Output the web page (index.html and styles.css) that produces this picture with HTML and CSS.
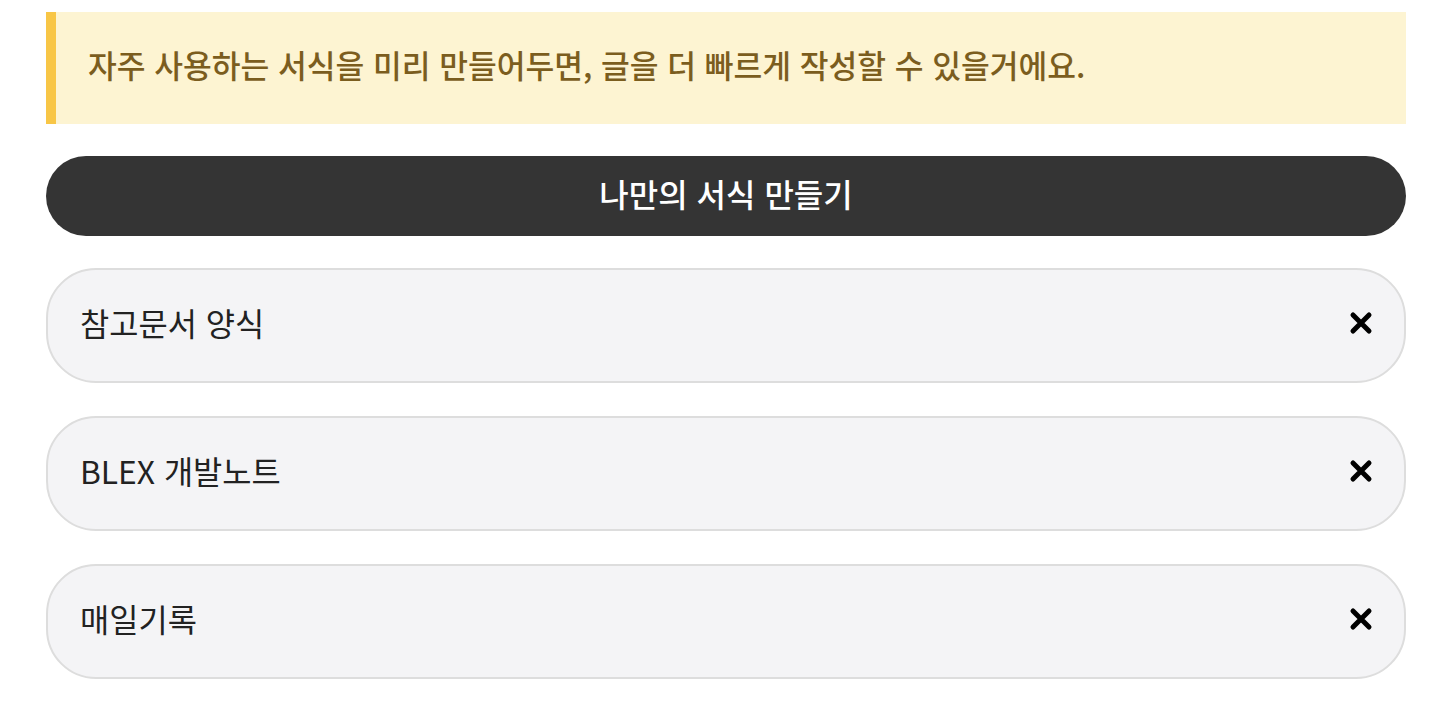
FILE: index.html
```html
<!DOCTYPE html>
<html lang="ko">
<head>
<meta charset="utf-8">
<link rel="stylesheet" href="styles.css">
</head>
<body>
<div class="page">
  <div class="alert">자주 사용하는 서식을 미리 만들어두면, 글을 더 빠르게 작성할 수 있을거에요.</div>
  <button class="create">나만의 서식 만들기</button>
  <ul class="list">
    <li class="item"><span class="name">참고문서 양식</span><svg class="close" viewBox="0 0 24 24" width="24" height="24"><path d="M4 4L20 20M20 4L4 20" stroke="#000" stroke-width="5" stroke-linecap="round"/></svg></li>
    <li class="item"><span class="name">BLEX 개발노트</span><svg class="close" viewBox="0 0 24 24" width="24" height="24"><path d="M4 4L20 20M20 4L4 20" stroke="#000" stroke-width="5" stroke-linecap="round"/></svg></li>
    <li class="item"><span class="name">매일기록</span><svg class="close" viewBox="0 0 24 24" width="24" height="24"><path d="M4 4L20 20M20 4L4 20" stroke="#000" stroke-width="5" stroke-linecap="round"/></svg></li>
  </ul>
</div>
</body>
</html>
```

FILE: styles.css
```css
html, body {
  margin: 0;
  padding: 0;
  background: #fff;
}
body {
  font-family: "Noto Sans CJK KR", "Noto Sans", sans-serif;
}
.page {
  padding: 12px 42px 0 46px;
  display: flex;
  flex-direction: column;
}
.alert {
  height: 112px;
  box-sizing: border-box;
  background: #fdf4d2;
  border-left: 10px solid #f8c646;
  color: #7b5d1e;
  font-size: 31.25px;
  font-weight: 500;
  display: flex;
  align-items: center;
  padding-left: 32px;
  padding-bottom: 8px;
}
.create {
  margin-top: 32px;
  height: 80px;
  border: none;
  border-radius: 40px;
  background: #343434;
  color: #fff;
  font-family: inherit;
  font-size: 32px;
  font-weight: 500;
  padding: 0 0 6px;
}
.list {
  list-style: none;
  margin: 32px 0 0;
  padding: 0;
  display: flex;
  flex-direction: column;
  gap: 33px;
}
.item {
  height: 115px;
  box-sizing: border-box;
  border: 2px solid #dddddd;
  border-radius: 50px;
  background: #f4f4f6;
  display: flex;
  align-items: center;
  justify-content: space-between;
  padding: 0 31px 8px 32px;
}
.name {
  font-size: 31.75px;
  color: #222;
}
.close {
  display: block;
  margin-top: 3px;
}
```
